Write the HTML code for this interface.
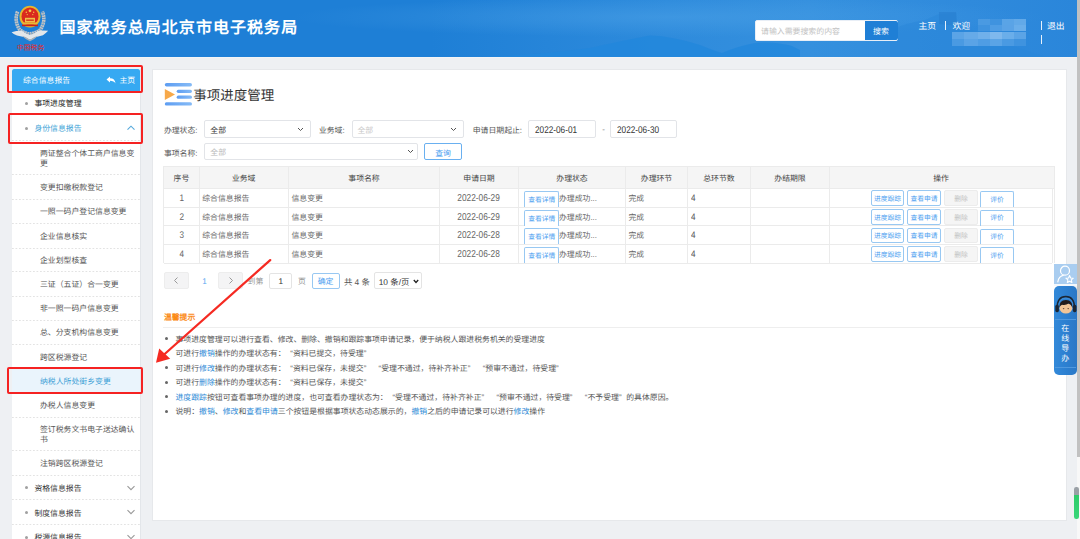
<!DOCTYPE html>
<html lang="zh-CN"><head><meta charset="utf-8"><style>
html,body{margin:0;padding:0;}
body{width:1080px;height:539px;overflow:hidden;position:relative;background:#eef0f3;font-family:"Liberation Sans",sans-serif;text-rendering:geometricPrecision;}
.t{position:absolute;white-space:nowrap;}
.b{position:absolute;}
.q1{display:inline-block;width:7.3px;text-align:right;}
.q2{display:inline-block;width:7.3px;text-align:left;}
</style></head><body>
<div class="b" style="left:0px;top:0px;width:1077.00px;height:57.00px;background:linear-gradient(90deg,#1e7fd6 0%,#1e7fd6 40%,#2e8bdc 62%,#3590de 75%,#2f8adc 90%,#2a86da 100%)"></div>
<svg class="b" style="left:0;top:0" width="1077" height="57" viewBox="0 0 1077 57">
<defs><radialGradient id="glow" cx="0.62" cy="0.3" r="0.35"><stop offset="0" stop-color="#4aa0e6" stop-opacity="0.55"/><stop offset="1" stop-color="#4aa0e6" stop-opacity="0"/></radialGradient></defs>
<rect x="0" y="0" width="1077" height="57" fill="url(#glow)"/>
<path d="M480 57 Q540 55 590 48 Q625 40 650 35.5 Q672 36 700 45 Q712 50 722 53 Q738 46 755 43 Q775 41 792 46 L800 50 L800 57 Z" fill="#2287dc" opacity="0.8"/>
<path d="M890 30 Q910 22 925 20 L939 14 L956 13 L957 25 Q990 35 1010 45 Q1030 52 1045 57 L890 57 Z" fill="#2a86d8" opacity="0.55"/>
<path d="M939 12 L956 12 L957 26 L939 24 Z" fill="#2a80d2" opacity="0.7"/>
</svg>
<div class="b" style="left:0px;top:57px;width:1077.00px;height:1.00px;background:#f3f4f6"></div>
<svg class="b" style="left:8px;top:2px" width="44" height="52" viewBox="0 0 44 52">
<path d="M9.6 9.5 Q6 19 11.5 27.5 Q16 31.5 22 31.8 Q28 31.5 32.5 27.5 Q38 19 34.4 9.5" stroke="#bfc5ca" stroke-width="3.6" stroke-dasharray="2 0.5" fill="none"/>
<path d="M9.6 9.5 Q6 19 11.5 27.5 Q16 31.5 22 31.8 Q28 31.5 32.5 27.5 Q38 19 34.4 9.5" stroke="#7d858c" stroke-width="0.7" stroke-dasharray="1 1" fill="none" opacity="0.8"/>
<ellipse cx="22" cy="14.6" rx="10.5" ry="10.9" fill="#e7b62e"/>
<ellipse cx="22" cy="14.4" rx="8.5" ry="8.9" fill="#da2a1e"/>
<rect x="17" y="15.8" width="10" height="4.6" fill="#eec04a"/><rect x="18.2" y="17.4" width="7.6" height="1.6" fill="#d9461e"/>
<rect x="15" y="20.4" width="14" height="2.2" fill="#e9b838"/>
<rect x="14" y="22.6" width="16" height="1.6" fill="#c7221a"/>
<circle cx="22" cy="8.8" r="1.4" fill="#f3cd4a"/>
<circle cx="18.3" cy="10.2" r="0.7" fill="#f3cd4a"/><circle cx="25.7" cy="10.2" r="0.7" fill="#f3cd4a"/>
<circle cx="19.2" cy="12.6" r="0.6" fill="#f3cd4a"/><circle cx="24.8" cy="12.6" r="0.6" fill="#f3cd4a"/>
<path d="M3.6 30.2 Q9 28.6 14 28.8 Q19 32.5 22 33 Q25 32.5 30 28.8 Q35 28.4 40.2 28.8 Q37.5 31.6 35 33.2 Q28 34.6 22 37.8 Q16 34.6 9 33.6 Q6 32.6 3.6 30.2 Z" fill="#e3e7ea"/>
<path d="M14 33.8 Q18 35 22 37.8 Q26 35 30 33.8 Q26 38 22 39.2 Q18 38 14 33.8 Z" fill="#a9b1b7"/>
<text x="8.8" y="48.4" font-family="Liberation Serif" font-size="6.9" fill="#f22418">中国税务</text>
</svg>
<div class="t" style="left:59.5px;top:17.60px;font-size:16px;line-height:22px;color:#fff;font-weight:bold;letter-spacing:1.05px;">国家税务总局北京市电子税务局</div>
<div class="b" style="left:755px;top:20px;width:143.00px;height:20.50px;background:#fff;border-radius:2px;border:1px solid #e8eef6;box-sizing:border-box"></div>
<div class="b" style="left:865px;top:20.5px;width:32.50px;height:19.50px;background:#1f7fd6;border-radius:0 2px 2px 0"></div>
<div class="t" style="left:761px;top:25.80px;font-size:7.9px;line-height:12px;color:#c2c2c2;">请输入需要搜索的内容</div>
<div class="t" style="left:873px;top:25.80px;font-size:7.9px;line-height:12px;color:#fff;">搜索</div>
<div class="t" style="left:918.5px;top:20.30px;font-size:8.8px;line-height:12px;color:#fff;">主页</div>
<div class="b" style="left:945.3px;top:21px;width:1.00px;height:9.00px;background:#e8f1fb"></div>
<div class="t" style="left:952.5px;top:20.30px;font-size:8.8px;line-height:12px;color:#fff;">欢迎</div>
<div class="b" style="left:978px;top:19px;width:12.00px;height:6.00px;background:#4a9ae2"></div>
<div class="b" style="left:990px;top:19px;width:12.00px;height:6.00px;background:#3f93df"></div>
<div class="b" style="left:1002px;top:19px;width:12.00px;height:6.00px;background:#5aa4e6"></div>
<div class="b" style="left:1014px;top:19px;width:12.00px;height:6.00px;background:#62a9e8"></div>
<div class="b" style="left:978px;top:25px;width:12.00px;height:6.00px;background:#3f93df"></div>
<div class="b" style="left:990px;top:25px;width:12.00px;height:6.00px;background:#4f9de4"></div>
<div class="b" style="left:1002px;top:25px;width:12.00px;height:6.00px;background:#5aa3e6"></div>
<div class="b" style="left:1014px;top:25px;width:12.00px;height:6.00px;background:#6aaeea"></div>
<div class="b" style="left:952px;top:32px;width:12.00px;height:7.00px;background:#5ba4e6"></div>
<div class="b" style="left:964px;top:32px;width:14.00px;height:7.00px;background:#66aae8"></div>
<div class="b" style="left:978px;top:32px;width:12.00px;height:7.00px;background:#70b0ea"></div>
<div class="b" style="left:990px;top:32px;width:12.00px;height:7.00px;background:#7eb8ed"></div>
<div class="b" style="left:1002px;top:32px;width:12.00px;height:7.00px;background:#6aaeea"></div>
<div class="b" style="left:1014px;top:32px;width:12.00px;height:7.00px;background:#5ba4e6"></div>
<div class="b" style="left:952px;top:39px;width:12.00px;height:7.00px;background:#4a9ae2"></div>
<div class="b" style="left:964px;top:39px;width:14.00px;height:7.00px;background:#5aa3e6"></div>
<div class="b" style="left:978px;top:39px;width:12.00px;height:7.00px;background:#4f9de4"></div>
<div class="b" style="left:990px;top:39px;width:12.00px;height:7.00px;background:#5aa4e6"></div>
<div class="b" style="left:1002px;top:39px;width:12.00px;height:7.00px;background:#4a9ae2"></div>
<div class="b" style="left:1014px;top:39px;width:12.00px;height:7.00px;background:#3f93df"></div>
<div class="b" style="left:1040.5px;top:21px;width:1.00px;height:9.00px;background:#e8f1fb"></div>
<div class="b" style="left:1040.5px;top:35px;width:1.00px;height:9.00px;background:#e8f1fb"></div>
<div class="t" style="left:1047px;top:20.30px;font-size:8.8px;line-height:12px;color:#fff;">退出</div>
<div class="b" style="left:1077px;top:0px;width:3.00px;height:539.00px;background:#f8f8f8"></div>
<div class="b" style="left:1077px;top:0px;width:3.00px;height:457.00px;background:#c1c1c1"></div>
<div class="b" style="left:12px;top:69px;width:129.00px;height:470.00px;background:#fff;border-right:1px solid #e3e6ea;box-sizing:border-box"></div>
<div class="b" style="left:12px;top:69px;width:128.00px;height:22.00px;background:#36a9f2;border-radius:2px 2px 0 0"></div>
<div class="t" style="left:23px;top:75.30px;font-size:7.875px;line-height:12px;color:#fff;">综合信息报告</div>
<svg class="b" style="left:106px;top:76px" width="10" height="8" viewBox="0 0 10 8"><path d="M0.5 3.5 L4 0.5 L4 2.3 Q9 2.3 9.5 7.5 Q8 4.8 4 4.7 L4 6.5 Z" fill="#fff"/></svg>
<div class="t" style="left:119.5px;top:75.30px;font-size:7.875px;line-height:12px;color:#fff;">主页</div>
<div class="b" style="left:25px;top:101.8px;width:3.00px;height:3.00px;background:#a0a0a0;border-radius:50%"></div>
<div class="t" style="left:34.4px;top:98.30px;font-size:7.875px;line-height:12px;color:#222;">事项进度管理</div>
<div class="b" style="left:25px;top:126.8px;width:3.00px;height:3.00px;background:#a0a0a0;border-radius:50%"></div>
<div class="t" style="left:34.4px;top:123.30px;font-size:7.875px;line-height:12px;color:#3a9fd6;">身份信息报告</div>
<svg class="b" style="left:126.4px;top:125.0px" width="10" height="6" viewBox="0 0 10 6"><path d="M1.5 4.6 L5 1.2 L8.5 4.6" fill="none" stroke="#56a9dc" stroke-width="1.15"/></svg>
<div class="b" style="left:12px;top:140px;width:128.00px;height:1.00px;background-image:linear-gradient(90deg,#e3e3e3 60%,transparent 60%);background-size:3.5px 1px"></div>
<div class="b" style="left:12px;top:174px;width:128.00px;height:1.00px;background-image:linear-gradient(90deg,#e3e3e3 60%,transparent 60%);background-size:3.5px 1px"></div>
<div class="b" style="left:12px;top:198.6px;width:128.00px;height:1.00px;background-image:linear-gradient(90deg,#e3e3e3 60%,transparent 60%);background-size:3.5px 1px"></div>
<div class="b" style="left:12px;top:223px;width:128.00px;height:1.00px;background-image:linear-gradient(90deg,#e3e3e3 60%,transparent 60%);background-size:3.5px 1px"></div>
<div class="b" style="left:12px;top:247.5px;width:128.00px;height:1.00px;background-image:linear-gradient(90deg,#e3e3e3 60%,transparent 60%);background-size:3.5px 1px"></div>
<div class="b" style="left:12px;top:271.2px;width:128.00px;height:1.00px;background-image:linear-gradient(90deg,#e3e3e3 60%,transparent 60%);background-size:3.5px 1px"></div>
<div class="b" style="left:12px;top:295.5px;width:128.00px;height:1.00px;background-image:linear-gradient(90deg,#e3e3e3 60%,transparent 60%);background-size:3.5px 1px"></div>
<div class="b" style="left:12px;top:319.7px;width:128.00px;height:1.00px;background-image:linear-gradient(90deg,#e3e3e3 60%,transparent 60%);background-size:3.5px 1px"></div>
<div class="b" style="left:12px;top:344px;width:128.00px;height:1.00px;background-image:linear-gradient(90deg,#e3e3e3 60%,transparent 60%);background-size:3.5px 1px"></div>
<div class="b" style="left:12px;top:416.5px;width:128.00px;height:1.00px;background-image:linear-gradient(90deg,#e3e3e3 60%,transparent 60%);background-size:3.5px 1px"></div>
<div class="b" style="left:12px;top:450.4px;width:128.00px;height:1.00px;background-image:linear-gradient(90deg,#e3e3e3 60%,transparent 60%);background-size:3.5px 1px"></div>
<div class="b" style="left:12px;top:475.2px;width:128.00px;height:1.00px;background-image:linear-gradient(90deg,#e3e3e3 60%,transparent 60%);background-size:3.5px 1px"></div>
<div class="b" style="left:12px;top:499px;width:128.00px;height:1.00px;background-image:linear-gradient(90deg,#e3e3e3 60%,transparent 60%);background-size:3.5px 1px"></div>
<div class="b" style="left:12px;top:524px;width:128.00px;height:1.00px;background-image:linear-gradient(90deg,#e3e3e3 60%,transparent 60%);background-size:3.5px 1px"></div>
<div class="t" style="left:40px;top:148.30px;font-size:7.875px;line-height:12px;color:#555;">两证整合个体工商户信息变</div>
<div class="t" style="left:40px;top:157.90px;font-size:7.875px;line-height:12px;color:#555;">更</div>
<div class="t" style="left:40px;top:182.30px;font-size:7.875px;line-height:12px;color:#555;">变更扣缴税款登记</div>
<div class="t" style="left:40px;top:206.30px;font-size:7.875px;line-height:12px;color:#555;">一照一码户登记信息变更</div>
<div class="t" style="left:40px;top:230.90px;font-size:7.875px;line-height:12px;color:#555;">企业信息核实</div>
<div class="t" style="left:40px;top:254.70px;font-size:7.875px;line-height:12px;color:#555;">企业划型核查</div>
<div class="t" style="left:40px;top:279.00px;font-size:7.875px;line-height:12px;color:#555;">三证（五证）合一变更</div>
<div class="t" style="left:40px;top:303.10px;font-size:7.875px;line-height:12px;color:#555;">非一照一码户信息变更</div>
<div class="t" style="left:40px;top:327.30px;font-size:7.875px;line-height:12px;color:#555;">总、分支机构信息变更</div>
<div class="t" style="left:40px;top:351.60px;font-size:7.875px;line-height:12px;color:#555;">跨区税源登记</div>
<div class="t" style="left:40px;top:399.90px;font-size:7.875px;line-height:12px;color:#555;">办税人信息变更</div>
<div class="t" style="left:40px;top:424.30px;font-size:7.875px;line-height:12px;color:#555;">签订税务文书电子送达确认</div>
<div class="t" style="left:40px;top:434.30px;font-size:7.875px;line-height:12px;color:#555;">书</div>
<div class="t" style="left:40px;top:458.40px;font-size:7.875px;line-height:12px;color:#555;">注销跨区税源登记</div>
<div class="b" style="left:12px;top:368px;width:128.00px;height:24.50px;background:#eaf4fc"></div>
<div class="t" style="left:40px;top:375.70px;font-size:7.875px;line-height:12px;color:#3a9fd6;">纳税人所处街乡变更</div>
<div class="b" style="left:25px;top:486.3px;width:3.00px;height:3.00px;background:#a0a0a0;border-radius:50%"></div>
<div class="t" style="left:34.4px;top:482.80px;font-size:7.875px;line-height:12px;color:#333;">资格信息报告</div>
<svg class="b" style="left:126.4px;top:484.5px" width="10" height="6" viewBox="0 0 10 6"><path d="M1.5 1.2 L5 4.6 L8.5 1.2" fill="none" stroke="#9a9a9a" stroke-width="1.15"/></svg>
<div class="b" style="left:25px;top:511.2px;width:3.00px;height:3.00px;background:#a0a0a0;border-radius:50%"></div>
<div class="t" style="left:34.4px;top:507.70px;font-size:7.875px;line-height:12px;color:#333;">制度信息报告</div>
<svg class="b" style="left:126.4px;top:509.4px" width="10" height="6" viewBox="0 0 10 6"><path d="M1.5 1.2 L5 4.6 L8.5 1.2" fill="none" stroke="#9a9a9a" stroke-width="1.15"/></svg>
<div class="b" style="left:25px;top:535.8px;width:3.00px;height:3.00px;background:#a0a0a0;border-radius:50%"></div>
<div class="t" style="left:34.4px;top:532.30px;font-size:7.875px;line-height:12px;color:#333;">税源信息报告</div>
<svg class="b" style="left:126.4px;top:534.0px" width="10" height="6" viewBox="0 0 10 6"><path d="M1.5 1.2 L5 4.6 L8.5 1.2" fill="none" stroke="#9a9a9a" stroke-width="1.15"/></svg>
<div class="b" style="left:7px;top:65px;width:135.80px;height:28.00px;border:2px solid #f52222;border-radius:2px;box-sizing:border-box"></div>
<div class="b" style="left:8px;top:113px;width:134.80px;height:30.50px;border:2px solid #f52222;border-radius:2px;box-sizing:border-box"></div>
<div class="b" style="left:7px;top:367px;width:135.80px;height:26.50px;border:2px solid #f52222;border-radius:2px;box-sizing:border-box"></div>
<div class="b" style="left:152px;top:69px;width:914.50px;height:451.50px;background:#fff;border:1px solid #e6e8eb;box-sizing:border-box"></div>
<svg class="b" style="left:164px;top:82px" width="29" height="24" viewBox="0 0 29 24">
<defs><linearGradient id="ib" x1="0" x2="1"><stop offset="0" stop-color="#5d9df2"/><stop offset="1" stop-color="#86bbf6"/></linearGradient></defs>
<rect x="0.8" y="1" width="27.2" height="3.6" rx="1.8" fill="url(#ib)"/>
<rect x="12.7" y="7.7" width="15.3" height="3.2" rx="1.6" fill="url(#ib)"/>
<rect x="12.7" y="13.6" width="15.3" height="3.2" rx="1.6" fill="url(#ib)"/>
<rect x="0.8" y="20.3" width="27.2" height="3.2" rx="1.6" fill="url(#ib)"/>
<path d="M0.8 7 L11 12.4 L0.8 18 Z" fill="#f7a94a"/>
</svg>
<div class="t" style="left:193.3px;top:86.70px;font-size:13.5px;line-height:18px;color:#333;">事项进度管理</div>
<div class="t" style="left:163.9px;top:124.70px;font-size:7.875px;line-height:12px;color:#555;">办理状态:</div>
<div class="b" style="left:204.3px;top:120.2px;width:106.30px;height:18.10px;background:#fff;border:1px solid #e2e4e8;border-radius:2px;box-sizing:border-box"></div><div class="t" style="left:210.3px;top:124.55px;font-size:7.875px;line-height:12px;color:#333;">全部</div><svg class="b" style="left:296.9px;top:126.8px" width="7" height="5" viewBox="0 0 7 5"><path d="M1 1 L3.5 3.5 L6 1" fill="none" stroke="#555" stroke-width="1"/></svg>
<div class="t" style="left:318.9px;top:124.70px;font-size:7.875px;line-height:12px;color:#555;">业务域:</div>
<div class="b" style="left:351.5px;top:120.2px;width:112.00px;height:18.10px;background:#fff;border:1px solid #e2e4e8;border-radius:2px;box-sizing:border-box"></div><div class="t" style="left:357.5px;top:124.55px;font-size:7.875px;line-height:12px;color:#c8c8c8;">全部</div><svg class="b" style="left:449.8px;top:126.8px" width="7" height="5" viewBox="0 0 7 5"><path d="M1 1 L3.5 3.5 L6 1" fill="none" stroke="#555" stroke-width="1"/></svg>
<div class="t" style="left:472.7px;top:124.70px;font-size:7.875px;line-height:12px;color:#555;">申请日期起止:</div>
<div class="b" style="left:528.2px;top:120.4px;width:67.40px;height:18.00px;background:#fff;border:1px solid #e2e4e8;border-radius:2px;box-sizing:border-box"></div>
<div class="t" style="left:534.6px;top:124.30px;font-size:9.8px;line-height:14px;color:#333"><span style="display:inline-block;transform:scaleX(0.84);transform-origin:0 50%">2022-06-01</span></div>
<div class="t" style="left:602.3px;top:124.30px;font-size:8px;line-height:12px;color:#777;">-</div>
<div class="b" style="left:610.4px;top:120.4px;width:66.90px;height:18.00px;background:#fff;border:1px solid #e2e4e8;border-radius:2px;box-sizing:border-box"></div>
<div class="t" style="left:616.6px;top:124.30px;font-size:9.8px;line-height:14px;color:#333"><span style="display:inline-block;transform:scaleX(0.84);transform-origin:0 50%">2022-06-30</span></div>
<div class="t" style="left:163.9px;top:147.90px;font-size:7.875px;line-height:12px;color:#555;">事项名称:</div>
<div class="b" style="left:204.3px;top:143.3px;width:213.30px;height:17.10px;background:#fff;border:1px solid #e2e4e8;border-radius:2px;box-sizing:border-box"></div><div class="t" style="left:210.3px;top:147.15px;font-size:7.875px;line-height:12px;color:#b8b8b8;">全部</div><svg class="b" style="left:406.5px;top:149.4px" width="7" height="5" viewBox="0 0 7 5"><path d="M1 1 L3.5 3.5 L6 1" fill="none" stroke="#555" stroke-width="1"/></svg>
<div class="b" style="left:424.4px;top:143.3px;width:37.30px;height:17.10px;background:#fff;border:1px solid #6ab0f0;border-radius:2px;box-sizing:border-box"></div>
<div class="t" style="left:425.00px;width:36px;text-align:center;top:147.50px;font-size:7.875px;line-height:12px;color:#4a9ef0;">查询</div>
<div class="b" style="left:163.7px;top:166px;width:891.00px;height:22.30px;background:#f5f5f5"></div>
<div class="b" style="left:163.7px;top:165.5px;width:891.00px;height:1.00px;background:#ebebeb"></div>
<div class="b" style="left:163.7px;top:187.8px;width:891.00px;height:1.00px;background:#ebebeb"></div>
<div class="b" style="left:163.7px;top:206.9px;width:888.30px;height:1.00px;background:#ebebeb"></div>
<div class="b" style="left:163.7px;top:225.4px;width:888.30px;height:1.00px;background:#ebebeb"></div>
<div class="b" style="left:163.7px;top:243.9px;width:888.30px;height:1.00px;background:#ebebeb"></div>
<div class="b" style="left:163.7px;top:262.8px;width:888.30px;height:1.00px;background:#ebebeb"></div>
<div class="b" style="left:163.2px;top:166px;width:1.00px;height:97.30px;background:#ebebeb"></div>
<div class="b" style="left:198.5px;top:166px;width:1.00px;height:97.30px;background:#ebebeb"></div>
<div class="b" style="left:287.8px;top:166px;width:1.00px;height:97.30px;background:#ebebeb"></div>
<div class="b" style="left:439.3px;top:166px;width:1.00px;height:97.30px;background:#ebebeb"></div>
<div class="b" style="left:517.5px;top:166px;width:1.00px;height:97.30px;background:#ebebeb"></div>
<div class="b" style="left:625.2px;top:166px;width:1.00px;height:97.30px;background:#ebebeb"></div>
<div class="b" style="left:686.9px;top:166px;width:1.00px;height:97.30px;background:#ebebeb"></div>
<div class="b" style="left:749.9px;top:166px;width:1.00px;height:97.30px;background:#ebebeb"></div>
<div class="b" style="left:829.1px;top:166px;width:1.00px;height:97.30px;background:#ebebeb"></div>
<div class="b" style="left:1051.5px;top:188.3px;width:1.00px;height:75.00px;background:#ebebeb"></div>
<div class="b" style="left:1054.0px;top:166px;width:0.80px;height:97.30px;background:#ebebeb"></div>
<div class="t" style="left:121.40px;width:120px;text-align:center;top:172.90px;font-size:7.875px;line-height:12px;color:#444;">序号</div>
<div class="t" style="left:183.70px;width:120px;text-align:center;top:172.90px;font-size:7.875px;line-height:12px;color:#444;">业务域</div>
<div class="t" style="left:304.00px;width:120px;text-align:center;top:172.90px;font-size:7.875px;line-height:12px;color:#444;">事项名称</div>
<div class="t" style="left:419.00px;width:120px;text-align:center;top:172.90px;font-size:7.875px;line-height:12px;color:#444;">申请日期</div>
<div class="t" style="left:512.00px;width:120px;text-align:center;top:172.90px;font-size:7.875px;line-height:12px;color:#444;">办理状态</div>
<div class="t" style="left:596.50px;width:120px;text-align:center;top:172.90px;font-size:7.875px;line-height:12px;color:#444;">办理环节</div>
<div class="t" style="left:658.90px;width:120px;text-align:center;top:172.90px;font-size:7.875px;line-height:12px;color:#444;">总环节数</div>
<div class="t" style="left:730.00px;width:120px;text-align:center;top:172.90px;font-size:7.875px;line-height:12px;color:#444;">办结期限</div>
<div class="t" style="left:881.00px;width:120px;text-align:center;top:172.90px;font-size:7.875px;line-height:12px;color:#444;">操作</div>
<div class="t" style="left:166.70px;width:30px;text-align:center;top:191.75px;font-size:9.6px;line-height:14px;color:#666"><span style="display:inline-block;transform:scaleX(0.85);transform-origin:50% 50%">1</span></div>
<div class="t" style="left:202.2px;top:192.85px;font-size:7.875px;line-height:12px;color:#666;">综合信息报告</div>
<div class="t" style="left:291.5px;top:192.85px;font-size:7.875px;line-height:12px;color:#666;">信息变更</div>
<div class="t" style="left:439.00px;width:80px;text-align:center;top:191.75px;font-size:10px;line-height:14px;color:#666"><span style="display:inline-block;transform:scaleX(0.83);transform-origin:50% 50%">2022-06-29</span></div>
<div class="b" style="left:524.3px;top:190.60000000000002px;width:34.90px;height:16.80px;border:1px solid #98c8f2;border-bottom:none;border-radius:2px 2px 0 0;box-sizing:border-box;background:#fff"></div>
<div class="t" style="left:521.80px;width:40px;text-align:center;top:195.05px;font-size:6.75px;line-height:12px;color:#4a9ef0;">查看详情</div>
<div class="t" style="left:559px;top:192.85px;font-size:7.875px;line-height:12px;color:#666;">办理成功...</div>
<div class="t" style="left:628.5px;top:192.85px;font-size:7.875px;line-height:12px;color:#666;">完成</div>
<div class="t" style="left:691px;top:191.75px;font-size:9.6px;line-height:14px;color:#555"><span style="display:inline-block;transform:scaleX(0.85);transform-origin:0 50%">4</span></div>
<div class="b" style="left:870.7px;top:190.20000000000002px;width:33.70px;height:15.50px;border:1px solid #98c8f2;border-radius:2px;box-sizing:border-box"></div>
<div class="t" style="left:867.50px;width:40px;text-align:center;top:193.85px;font-size:6.75px;line-height:12px;color:#4a9ef0;">进度跟踪</div>
<div class="b" style="left:907.2px;top:190.20000000000002px;width:33.70px;height:15.50px;border:1px solid #98c8f2;border-radius:2px;box-sizing:border-box"></div>
<div class="t" style="left:904.00px;width:40px;text-align:center;top:193.85px;font-size:6.75px;line-height:12px;color:#4a9ef0;">查看申请</div>
<div class="b" style="left:944.3px;top:190.20000000000002px;width:33.30px;height:15.50px;background:#f5f5f5;border:1px solid #ececec;border-radius:2px;box-sizing:border-box"></div>
<div class="t" style="left:941.00px;width:40px;text-align:center;top:193.85px;font-size:6.75px;line-height:12px;color:#c0c0c0;">删除</div>
<div class="b" style="left:980.4px;top:191.0px;width:33.50px;height:16.40px;border:1px solid #98c8f2;border-bottom:none;border-radius:2px 2px 0 0;box-sizing:border-box"></div>
<div class="t" style="left:977.00px;width:40px;text-align:center;top:194.65px;font-size:6.75px;line-height:12px;color:#4a9ef0;">评价</div>
<div class="t" style="left:166.70px;width:30px;text-align:center;top:210.55px;font-size:9.6px;line-height:14px;color:#666"><span style="display:inline-block;transform:scaleX(0.85);transform-origin:50% 50%">2</span></div>
<div class="t" style="left:202.2px;top:211.65px;font-size:7.875px;line-height:12px;color:#666;">综合信息报告</div>
<div class="t" style="left:291.5px;top:211.65px;font-size:7.875px;line-height:12px;color:#666;">信息变更</div>
<div class="t" style="left:439.00px;width:80px;text-align:center;top:210.55px;font-size:10px;line-height:14px;color:#666"><span style="display:inline-block;transform:scaleX(0.83);transform-origin:50% 50%">2022-06-29</span></div>
<div class="b" style="left:524.3px;top:209.70000000000002px;width:34.90px;height:16.20px;border:1px solid #98c8f2;border-bottom:none;border-radius:2px 2px 0 0;box-sizing:border-box;background:#fff"></div>
<div class="t" style="left:521.80px;width:40px;text-align:center;top:213.85px;font-size:6.75px;line-height:12px;color:#4a9ef0;">查看详情</div>
<div class="t" style="left:559px;top:211.65px;font-size:7.875px;line-height:12px;color:#666;">办理成功...</div>
<div class="t" style="left:628.5px;top:211.65px;font-size:7.875px;line-height:12px;color:#666;">完成</div>
<div class="t" style="left:691px;top:210.55px;font-size:9.6px;line-height:14px;color:#555"><span style="display:inline-block;transform:scaleX(0.85);transform-origin:0 50%">4</span></div>
<div class="b" style="left:870.7px;top:209.3px;width:33.70px;height:15.50px;border:1px solid #98c8f2;border-radius:2px;box-sizing:border-box"></div>
<div class="t" style="left:867.50px;width:40px;text-align:center;top:212.65px;font-size:6.75px;line-height:12px;color:#4a9ef0;">进度跟踪</div>
<div class="b" style="left:907.2px;top:209.3px;width:33.70px;height:15.50px;border:1px solid #98c8f2;border-radius:2px;box-sizing:border-box"></div>
<div class="t" style="left:904.00px;width:40px;text-align:center;top:212.65px;font-size:6.75px;line-height:12px;color:#4a9ef0;">查看申请</div>
<div class="b" style="left:944.3px;top:209.3px;width:33.30px;height:15.50px;background:#f5f5f5;border:1px solid #ececec;border-radius:2px;box-sizing:border-box"></div>
<div class="t" style="left:941.00px;width:40px;text-align:center;top:212.65px;font-size:6.75px;line-height:12px;color:#c0c0c0;">删除</div>
<div class="b" style="left:980.4px;top:210.1px;width:33.50px;height:15.80px;border:1px solid #98c8f2;border-bottom:none;border-radius:2px 2px 0 0;box-sizing:border-box"></div>
<div class="t" style="left:977.00px;width:40px;text-align:center;top:213.45px;font-size:6.75px;line-height:12px;color:#4a9ef0;">评价</div>
<div class="t" style="left:166.70px;width:30px;text-align:center;top:229.05px;font-size:9.6px;line-height:14px;color:#666"><span style="display:inline-block;transform:scaleX(0.85);transform-origin:50% 50%">3</span></div>
<div class="t" style="left:202.2px;top:230.15px;font-size:7.875px;line-height:12px;color:#666;">综合信息报告</div>
<div class="t" style="left:291.5px;top:230.15px;font-size:7.875px;line-height:12px;color:#666;">信息变更</div>
<div class="t" style="left:439.00px;width:80px;text-align:center;top:229.05px;font-size:10px;line-height:14px;color:#666"><span style="display:inline-block;transform:scaleX(0.83);transform-origin:50% 50%">2022-06-28</span></div>
<div class="b" style="left:524.3px;top:228.20000000000002px;width:34.90px;height:16.20px;border:1px solid #98c8f2;border-bottom:none;border-radius:2px 2px 0 0;box-sizing:border-box;background:#fff"></div>
<div class="t" style="left:521.80px;width:40px;text-align:center;top:232.35px;font-size:6.75px;line-height:12px;color:#4a9ef0;">查看详情</div>
<div class="t" style="left:559px;top:230.15px;font-size:7.875px;line-height:12px;color:#666;">办理成功...</div>
<div class="t" style="left:628.5px;top:230.15px;font-size:7.875px;line-height:12px;color:#666;">完成</div>
<div class="t" style="left:691px;top:229.05px;font-size:9.6px;line-height:14px;color:#555"><span style="display:inline-block;transform:scaleX(0.85);transform-origin:0 50%">4</span></div>
<div class="b" style="left:870.7px;top:227.8px;width:33.70px;height:15.50px;border:1px solid #98c8f2;border-radius:2px;box-sizing:border-box"></div>
<div class="t" style="left:867.50px;width:40px;text-align:center;top:231.15px;font-size:6.75px;line-height:12px;color:#4a9ef0;">进度跟踪</div>
<div class="b" style="left:907.2px;top:227.8px;width:33.70px;height:15.50px;border:1px solid #98c8f2;border-radius:2px;box-sizing:border-box"></div>
<div class="t" style="left:904.00px;width:40px;text-align:center;top:231.15px;font-size:6.75px;line-height:12px;color:#4a9ef0;">查看申请</div>
<div class="b" style="left:944.3px;top:227.8px;width:33.30px;height:15.50px;background:#f5f5f5;border:1px solid #ececec;border-radius:2px;box-sizing:border-box"></div>
<div class="t" style="left:941.00px;width:40px;text-align:center;top:231.15px;font-size:6.75px;line-height:12px;color:#c0c0c0;">删除</div>
<div class="b" style="left:980.4px;top:228.6px;width:33.50px;height:15.80px;border:1px solid #98c8f2;border-bottom:none;border-radius:2px 2px 0 0;box-sizing:border-box"></div>
<div class="t" style="left:977.00px;width:40px;text-align:center;top:231.95px;font-size:6.75px;line-height:12px;color:#4a9ef0;">评价</div>
<div class="t" style="left:166.70px;width:30px;text-align:center;top:247.75px;font-size:9.6px;line-height:14px;color:#666"><span style="display:inline-block;transform:scaleX(0.85);transform-origin:50% 50%">4</span></div>
<div class="t" style="left:202.2px;top:248.85px;font-size:7.875px;line-height:12px;color:#666;">综合信息报告</div>
<div class="t" style="left:291.5px;top:248.85px;font-size:7.875px;line-height:12px;color:#666;">信息变更</div>
<div class="t" style="left:439.00px;width:80px;text-align:center;top:247.75px;font-size:10px;line-height:14px;color:#666"><span style="display:inline-block;transform:scaleX(0.83);transform-origin:50% 50%">2022-06-28</span></div>
<div class="b" style="left:524.3px;top:246.70000000000002px;width:34.90px;height:16.60px;border:1px solid #98c8f2;border-bottom:none;border-radius:2px 2px 0 0;box-sizing:border-box;background:#fff"></div>
<div class="t" style="left:521.80px;width:40px;text-align:center;top:251.05px;font-size:6.75px;line-height:12px;color:#4a9ef0;">查看详情</div>
<div class="t" style="left:559px;top:248.85px;font-size:7.875px;line-height:12px;color:#666;">办理成功...</div>
<div class="t" style="left:628.5px;top:248.85px;font-size:7.875px;line-height:12px;color:#666;">完成</div>
<div class="t" style="left:691px;top:247.75px;font-size:9.6px;line-height:14px;color:#555"><span style="display:inline-block;transform:scaleX(0.85);transform-origin:0 50%">4</span></div>
<div class="b" style="left:870.7px;top:246.3px;width:33.70px;height:15.50px;border:1px solid #98c8f2;border-radius:2px;box-sizing:border-box"></div>
<div class="t" style="left:867.50px;width:40px;text-align:center;top:249.85px;font-size:6.75px;line-height:12px;color:#4a9ef0;">进度跟踪</div>
<div class="b" style="left:907.2px;top:246.3px;width:33.70px;height:15.50px;border:1px solid #98c8f2;border-radius:2px;box-sizing:border-box"></div>
<div class="t" style="left:904.00px;width:40px;text-align:center;top:249.85px;font-size:6.75px;line-height:12px;color:#4a9ef0;">查看申请</div>
<div class="b" style="left:944.3px;top:246.3px;width:33.30px;height:15.50px;background:#f5f5f5;border:1px solid #ececec;border-radius:2px;box-sizing:border-box"></div>
<div class="t" style="left:941.00px;width:40px;text-align:center;top:249.85px;font-size:6.75px;line-height:12px;color:#c0c0c0;">删除</div>
<div class="b" style="left:980.4px;top:247.1px;width:33.50px;height:16.20px;border:1px solid #98c8f2;border-bottom:none;border-radius:2px 2px 0 0;box-sizing:border-box"></div>
<div class="t" style="left:977.00px;width:40px;text-align:center;top:250.65px;font-size:6.75px;line-height:12px;color:#4a9ef0;">评价</div>
<div class="b" style="left:163.9px;top:272.2px;width:24.70px;height:16.60px;background:#f4f4f5;border:1px solid #ededed;box-sizing:border-box;border-radius:2px"></div>
<svg class="b" style="left:173px;top:277px" width="6" height="7" viewBox="0 0 6 7"><path d="M4.5 0.5 L1.5 3.5 L4.5 6.5" fill="none" stroke="#999" stroke-width="1"/></svg>
<div class="t" style="left:194.60px;width:20px;text-align:center;top:275.70px;font-size:8.2px;line-height:12px;color:#5aa7f0;">1</div>
<div class="b" style="left:218.3px;top:272.2px;width:24.50px;height:16.60px;background:#f4f4f5;border:1px solid #ededed;box-sizing:border-box;border-radius:2px"></div>
<svg class="b" style="left:228px;top:277px" width="6" height="7" viewBox="0 0 6 7"><path d="M1.5 0.5 L4.5 3.5 L1.5 6.5" fill="none" stroke="#999" stroke-width="1"/></svg>
<div class="t" style="left:247.6px;top:275.90px;font-size:7.875px;line-height:12px;color:#999;">到第</div>
<div class="b" style="left:269.3px;top:273px;width:23.10px;height:15.50px;background:#fff;border:1px solid #e4e4e4;border-radius:2px;box-sizing:border-box"></div>
<div class="t" style="left:270.80px;width:20px;text-align:center;top:276.10px;font-size:8.2px;line-height:12px;color:#333;">1</div>
<div class="t" style="left:298px;top:275.90px;font-size:7.875px;line-height:12px;color:#999;">页</div>
<div class="b" style="left:311.5px;top:273px;width:28.10px;height:16.00px;background:#fff;border:1px solid #98c8f2;border-radius:2px;box-sizing:border-box"></div>
<div class="t" style="left:310.50px;width:30px;text-align:center;top:275.90px;font-size:7.875px;line-height:12px;color:#4a9ef0;">确定</div>
<div class="t" style="left:343.9px;top:275.50px;font-size:8.4px;line-height:12px;color:#555;">共 4 条</div>
<div class="b" style="left:374.2px;top:272.2px;width:47.50px;height:16.40px;background:#fff;border:1px solid #e4e4e4;border-radius:2px;box-sizing:border-box"></div>
<div class="t" style="left:378.7px;top:275.60px;font-size:8.4px;line-height:12px;color:#333;">10 条/页</div>
<svg class="b" style="left:413px;top:279px" width="6" height="5" viewBox="0 0 6 5"><path d="M0.8 1 L3 3.5 L5.2 1" fill="none" stroke="#222" stroke-width="1.3"/></svg>
<div class="t" style="left:163.9px;top:311.50px;font-size:7.875px;line-height:12px;color:#fb8a16;font-weight:bold;">温馨提示</div>
<div class="b" style="left:163.3px;top:327px;width:891.40px;height:1.00px;background:#eeeeee"></div>
<div class="b" style="left:165px;top:337.2px;width:3.00px;height:3.00px;background:#666;border-radius:50%"></div>
<div class="t" style="left:175.5px;top:333.70px;font-size:7.875px;line-height:12px;color:#555;white-space:pre;">事项进度管理可以进行查看、修改、删除、撤销和跟踪事项申请记录，便于纳税人跟进税务机关的受理进度</div>
<div class="t" style="left:175.5px;top:348.20px;font-size:7.875px;line-height:12px;color:#555;white-space:pre;">可进行<span style="color:#2d8ad6">撤销</span>操作的办理状态有：<span class="q1">“</span>资料已提交，待受理<span class="q2">”</span></div>
<div class="b" style="left:165px;top:366.1px;width:3.00px;height:3.00px;background:#666;border-radius:50%"></div>
<div class="t" style="left:175.5px;top:362.60px;font-size:7.875px;line-height:12px;color:#555;white-space:pre;">可进行<span style="color:#2d8ad6">修改</span>操作的办理状态有：<span class="q1">“</span>资料已保存，未提交<span class="q2">”</span><span class="q1" style="margin-left:3px">“</span>受理不通过，待补齐补正<span class="q2">”</span><span class="q1" style="margin-left:3px">“</span>预审不通过，待受理<span class="q2">”</span></div>
<div class="b" style="left:165px;top:380.6px;width:3.00px;height:3.00px;background:#666;border-radius:50%"></div>
<div class="t" style="left:175.5px;top:377.10px;font-size:7.875px;line-height:12px;color:#555;white-space:pre;">可进行<span style="color:#2d8ad6">删除</span>操作的办理状态有：<span class="q1">“</span>资料已保存，未提交<span class="q2">”</span></div>
<div class="b" style="left:165px;top:395.0px;width:3.00px;height:3.00px;background:#666;border-radius:50%"></div>
<div class="t" style="left:175.5px;top:391.50px;font-size:7.875px;line-height:12px;color:#555;white-space:pre;"><span style="color:#2d8ad6">进度跟踪</span>按钮可查看事项办理的进度，也可查看办理状态为：<span class="q1">“</span>受理不通过，待补齐补正<span class="q2">”</span><span class="q1" style="margin-left:3px">“</span>预审不通过，待受理<span class="q2">”</span><span class="q1" style="margin-left:3px">“</span>不予受理<span class="q2">”</span>的具体原因。</div>
<div class="b" style="left:165px;top:409.90000000000003px;width:3.00px;height:3.00px;background:#666;border-radius:50%"></div>
<div class="t" style="left:175.5px;top:406.40px;font-size:7.875px;line-height:12px;color:#555;white-space:pre;">说明：<span style="color:#2d8ad6">撤销</span>、<span style="color:#2d8ad6">修改</span>和<span style="color:#2d8ad6">查看申请</span>三个按钮是根据事项状态动态展示的，<span style="color:#2d8ad6">撤销</span>之后的申请记录可以进行<span style="color:#2d8ad6">修改</span>操作</div>
<svg class="b" style="left:0;top:0" width="1080" height="539" viewBox="0 0 1080 539">
<path d="M270.2 260.1 L163 355.5" stroke="#f52a22" stroke-width="2.3" stroke-linecap="round"/>
<path d="M156 362.8 L159.2 348.4 L170.2 358.8 Z" fill="#f52a22"/>
</svg>
<div class="b" style="left:1053.9px;top:264.3px;width:22.90px;height:19.70px;background:#a9cdf0"></div>
<div class="b" style="left:1053.9px;top:284px;width:22.90px;height:2.00px;background:#f4f8fc"></div>
<svg class="b" style="left:1054px;top:264px" width="23" height="20" viewBox="0 0 23 20">
<circle cx="11" cy="6.7" r="4.5" fill="none" stroke="#fff" stroke-width="1.2"/>
<path d="M3.7 18.3 Q4.6 12.2 9.8 11.2" fill="none" stroke="#fff" stroke-width="1.2"/>
<path d="M15.60 11.50 L16.66 13.94 L19.31 14.19 L17.31 15.96 L17.89 18.56 L15.60 17.20 L13.31 18.56 L13.89 15.96 L11.89 14.19 L14.54 13.94 Z" fill="none" stroke="#fff" stroke-width="1.1" stroke-linejoin="round"/>
</svg>
<div class="b" style="left:1053.9px;top:285.9px;width:22.90px;height:89.60px;background:linear-gradient(90deg,#3389d9,#2c7fd0 55%,#2a78c6);border-radius:5px"></div>
<svg class="b" style="left:1054px;top:294px" width="23" height="24" viewBox="0 0 23 24">
<path d="M3.2 14 Q3 2.6 11.8 2.4 Q20.6 2.6 20.4 14" fill="none" stroke="#1c2633" stroke-width="1.5"/>
<path d="M4.6 13 Q4.6 4.4 11.8 4.2 Q19 4.4 19 13" fill="none" stroke="#3f8fd8" stroke-width="0.9"/>
<ellipse cx="11.9" cy="14.3" rx="6.4" ry="5.3" fill="#f2c597"/>
<path d="M5.4 13.5 Q5 6.2 11.9 6 Q18.8 6.2 18.4 13.5 Q17 10 14.5 9.6 Q12 11.5 8 10.8 Q6.2 11.6 5.4 13.5 Z" fill="#231c1c"/>
<rect x="1.3" y="10.8" width="3.6" height="7.4" rx="1.6" fill="#1c2633"/>
<rect x="18.9" y="10.8" width="3.6" height="7.4" rx="1.6" fill="#1c2633"/>
<ellipse cx="9.6" cy="14.6" rx="0.8" ry="0.6" fill="#6a4a3a"/><ellipse cx="14.2" cy="14.6" rx="0.8" ry="0.6" fill="#6a4a3a"/>
</svg>
<div class="b" style="left:1055px;top:318.6px;width:21.00px;height:0.80px;background:#4f98de"></div>
<div class="t" style="left:1055.30px;width:20px;text-align:center;top:322.70px;font-size:8px;line-height:12px;color:#fff;">在</div>
<div class="t" style="left:1055.30px;width:20px;text-align:center;top:332.70px;font-size:8px;line-height:12px;color:#fff;">线</div>
<div class="t" style="left:1055.30px;width:20px;text-align:center;top:342.90px;font-size:8px;line-height:12px;color:#fff;">导</div>
<div class="t" style="left:1055.30px;width:20px;text-align:center;top:353.10px;font-size:8px;line-height:12px;color:#fff;">办</div>
<div class="b" style="left:1055px;top:366.8px;width:21.00px;height:0.80px;background:#4f98de"></div>
<div class="b" style="left:1074.2px;top:487.1px;width:4.40px;height:32.40px;background:linear-gradient(180deg,#9aa0a6 0,#9aa0a6 24%,#2ecc6a 26%,#3ad67a 100%);border-radius:2.2px"></div>
</body></html>
